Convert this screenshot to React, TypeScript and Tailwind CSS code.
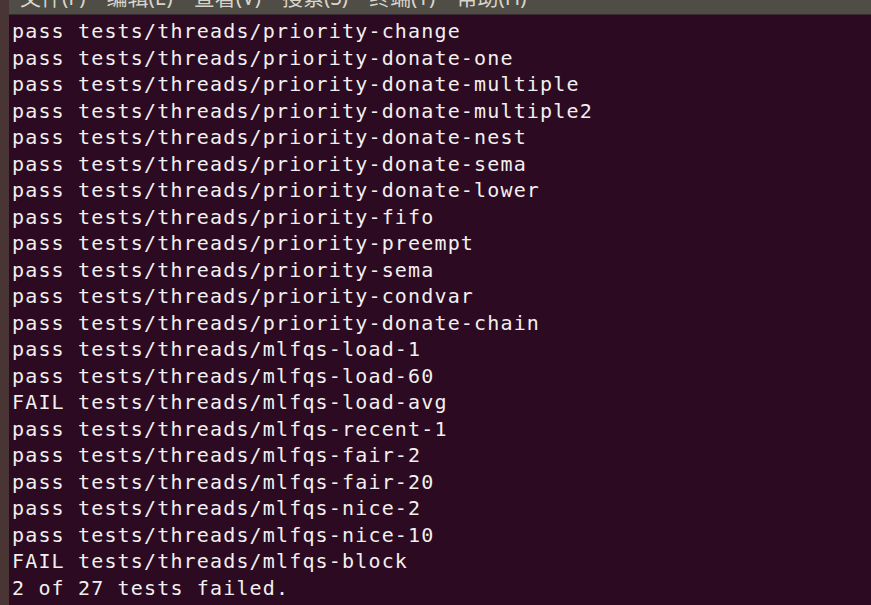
import React from "react";

const lines = [
  "pass tests/threads/priority-change",
  "pass tests/threads/priority-donate-one",
  "pass tests/threads/priority-donate-multiple",
  "pass tests/threads/priority-donate-multiple2",
  "pass tests/threads/priority-donate-nest",
  "pass tests/threads/priority-donate-sema",
  "pass tests/threads/priority-donate-lower",
  "pass tests/threads/priority-fifo",
  "pass tests/threads/priority-preempt",
  "pass tests/threads/priority-sema",
  "pass tests/threads/priority-condvar",
  "pass tests/threads/priority-donate-chain",
  "pass tests/threads/mlfqs-load-1",
  "pass tests/threads/mlfqs-load-60",
  "FAIL tests/threads/mlfqs-load-avg",
  "pass tests/threads/mlfqs-recent-1",
  "pass tests/threads/mlfqs-fair-2",
  "pass tests/threads/mlfqs-fair-20",
  "pass tests/threads/mlfqs-nice-2",
  "pass tests/threads/mlfqs-nice-10",
  "FAIL tests/threads/mlfqs-block",
  "2 of 27 tests failed.",
];

const menu = ["文件(F)", "编辑(E)", "查看(V)", "搜索(S)", "终端(T)", "帮助(H)"];

export default function App() {
  return (
    <div className="flex w-[871px] h-[605px] overflow-hidden bg-[#2c0a22]">
      {/* window edge on the left */}
      <div className="w-[9px] shrink-0 bg-[#4a3535]" />
      <div className="flex flex-col flex-1 min-w-0">
        <div className="h-[15px] shrink-0 overflow-hidden bg-[#4f4d45] border-b border-[#3a2a33]">
          <div
            className="flex gap-[21px] pl-[11px] -mt-[17px] text-[21px] leading-[28px] text-[#d8d4ca]"
            style={{ fontFamily: '"Noto Sans", "Noto Sans CJK SC", sans-serif' }}
          >
            {menu.map((m) => (
              <span key={m}>{m}</span>
            ))}
          </div>
        </div>
        <div
          className="pl-[3px] pt-[3px] text-[20px] leading-[26.5px] tracking-[1.16px] text-[#f2f0ee] whitespace-pre"
          style={{ fontFamily: '"DejaVu Sans Mono", monospace' }}
        >
          {lines.map((l, i) => (
            <div key={i}>{l}</div>
          ))}
        </div>
      </div>
    </div>
  );
}
